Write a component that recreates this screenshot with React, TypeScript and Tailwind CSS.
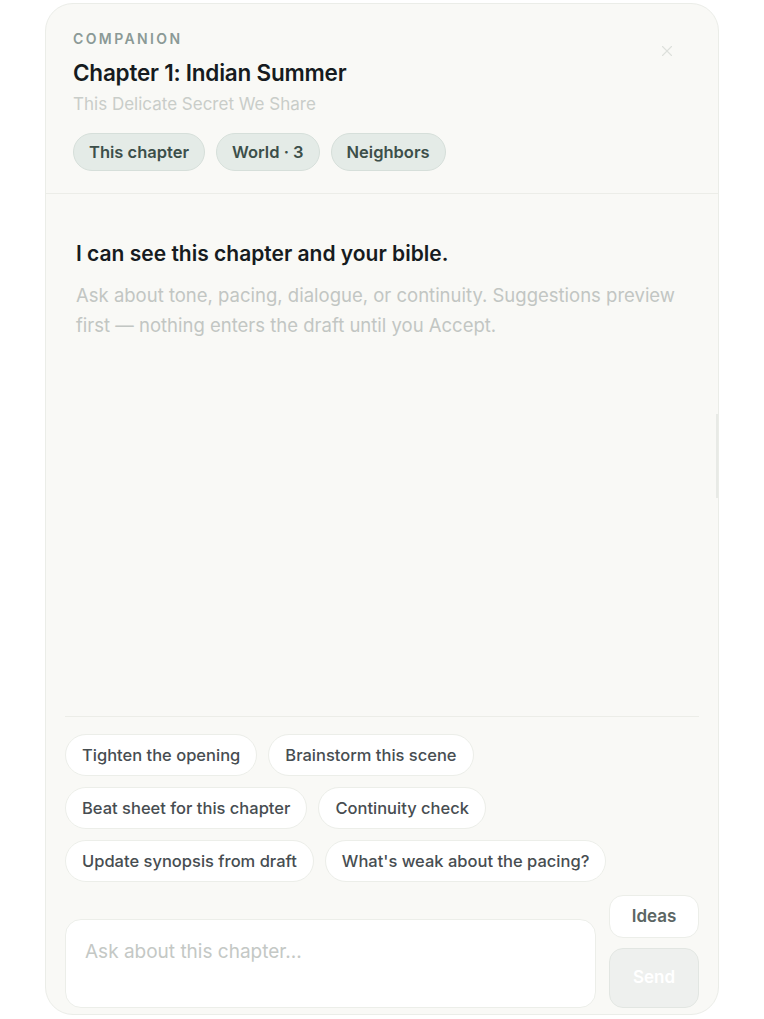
import { X } from 'lucide-react'

const SCOPES = ['This chapter', 'World · 3', 'Neighbors']

const SUGGESTIONS = [
  ['Tighten the opening', 'Brainstorm this scene'],
  ['Beat sheet for this chapter', 'Continuity check'],
  ['Update synopsis from draft', "What's weak about the pacing?"],
]

export default function App() {
  return (
    <div className="min-h-screen bg-white pt-[3px] pl-[45px]" style={{ fontFamily: 'Inter, "Noto Sans", sans-serif' }}>
      <div className="relative w-[674px] h-[1012px] rounded-[28px] border border-[#ebede8] bg-[#f9f9f6] flex flex-col overflow-hidden">
        {/* header */}
        <div className="relative px-[27px] pt-[27px] pb-[22px] border-b border-[#ecede8]">
          <p className="text-[14px] leading-4 font-semibold tracking-[0.17em] text-[#8b9a96]">COMPANION</p>
          <h1 className="mt-[12px] text-[22.5px] leading-7 font-semibold tracking-[-0.01em] text-[#161b20]">Chapter 1: Indian Summer</h1>
          <p className="mt-[6px] text-[17px] leading-[22px] text-[#c9cdc9]">This Delicate Secret We Share</p>
          <div className="mt-[18px] flex gap-[11px]">
            {SCOPES.map(s => (
              <span key={s} className="h-[38px] px-[15px] rounded-full border border-[#d6dfda] bg-[#e4ebe7] text-[16.5px] font-semibold text-[#3c4f4a] flex items-center">
                {s}
              </span>
            ))}
          </div>
          <button className="absolute right-[42px] top-[38px] text-[#dde0dc]">
            <X size={18} strokeWidth={1.5} />
          </button>
        </div>

        {/* messages */}
        <div className="flex-1 px-[30px] pt-[47px]">
          <p className="text-[21px] leading-[26px] font-semibold text-[#161b20]">I can see this chapter and your bible.</p>
          <p className="mt-[13px] text-[18.5px] leading-[30px] text-[#c2c6c3]">
            Ask about tone, pacing, dialogue, or continuity. Suggestions preview first — nothing enters the draft until you Accept.
          </p>
        </div>

        {/* composer */}
        <div className="mx-[19px] border-t border-[#ecede8] pt-[17px] pb-[6px]">
          <div className="flex flex-col gap-[11px]">
            {SUGGESTIONS.map((row, i) => (
              <div key={i} className="flex gap-[11px]">
                {row.map(s => (
                  <button key={s} className="h-[42px] px-[16px] rounded-full border border-[#eceee9] bg-white text-[16.5px] font-medium text-[#474d51]">
                    {s}
                  </button>
                ))}
              </div>
            ))}
          </div>
          <div className="mt-[13px] flex items-end gap-[13px]">
            <div className="w-[532px] h-[89px] rounded-[16px] border border-[#eceee9] bg-white px-[19px] pt-[18px] text-[19px] text-[#c4c8c5]">
              Ask about this chapter...
            </div>
            <div className="w-[90px] flex flex-col gap-[10px]">
              <button className="h-[43px] rounded-[14px] border border-[#eceee9] bg-white text-[17px] font-semibold text-[#5b6664]">Ideas</button>
              <button className="h-[60px] rounded-[14px] border border-[#e2e6e2] bg-[#eef0ee] text-[17px] font-semibold text-white">Send</button>
            </div>
          </div>
        </div>

        <div className="absolute right-0 top-[410px] w-[2px] h-[84px] bg-[#e8eae6]" />
      </div>
    </div>
  )
}
